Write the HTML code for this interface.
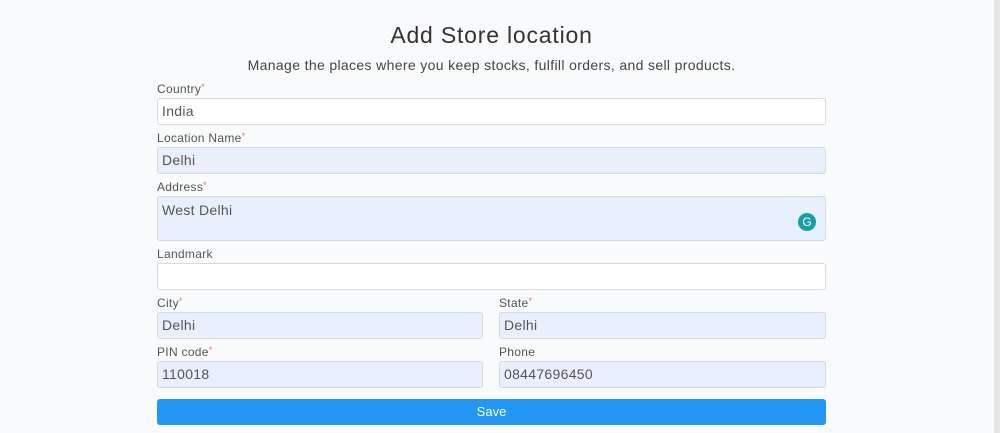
<!DOCTYPE html><html><head><style>
body{margin:0;width:1000px;height:433px;background:#f9fafb;font-family:"Liberation Sans",sans-serif;position:relative;overflow:hidden;color:#444}
.strip{position:absolute;right:0;top:0;width:6px;height:433px;background:#e6e6e6}
.t{position:absolute;left:0;width:983px;text-align:center}
.l{position:absolute;font-size:12px;color:#555;letter-spacing:0.3px}
.l b{color:#e57373;font-weight:normal;font-size:9px;vertical-align:top}
.i{position:absolute;box-sizing:border-box;border:1px solid #d6d9de;border-radius:3px;background:#e8f0fe;font-size:14px;color:#555;padding:0 0 0 4px;line-height:25px;letter-spacing:0.3px}
.w{background:#fff}
</style></head><body>
<div class="strip"></div>
<div class="t" style="top:22px;font-size:23px;color:#333;letter-spacing:0.8px">Add Store location</div>
<div class="t" style="top:57px;font-size:14px;color:#444;letter-spacing:0.35px">Manage the places where you keep stocks, fulfill orders, and sell products.</div>
<div class="l" style="left:157px;top:82px">Country<b>*</b></div>
<div class="i w" style="left:157px;top:98px;width:669px;height:27px">India</div>
<div class="l" style="left:157px;top:131px">Location Name<b>*</b></div>
<div class="i" style="left:157px;top:147px;width:669px;height:27px">Delhi</div>
<div class="l" style="left:157px;top:180px">Address<b>*</b></div>
<div class="i" style="left:157px;top:196px;width:669px;height:45px;line-height:26px">West Delhi
<div style="position:absolute;left:640px;top:16px;width:18px;height:18px;border-radius:50%;background:#15a0a8;color:#fff;font-size:12px;line-height:18px;text-align:center;letter-spacing:0">G</div></div>
<div class="l" style="left:157px;top:247px">Landmark</div>
<div class="i w" style="left:157px;top:263px;width:669px;height:27px"></div>
<div class="l" style="left:157px;top:296px">City<b>*</b></div>
<div class="i" style="left:157px;top:312px;width:326px;height:27px">Delhi</div>
<div class="l" style="left:499px;top:296px">State<b>*</b></div>
<div class="i" style="left:499px;top:312px;width:327px;height:27px">Delhi</div>
<div class="l" style="left:157px;top:345px">PIN code<b>*</b></div>
<div class="i" style="left:157px;top:361px;width:326px;height:27px">110018</div>
<div class="l" style="left:499px;top:345px">Phone</div>
<div class="i" style="left:499px;top:361px;width:327px;height:27px">08447696450</div>
<div style="position:absolute;left:157px;top:399px;width:669px;height:26px;background:#2196f3;border-radius:3px;color:#fff;text-align:center;line-height:26px;font-size:13px">Save</div>
</body></html>
